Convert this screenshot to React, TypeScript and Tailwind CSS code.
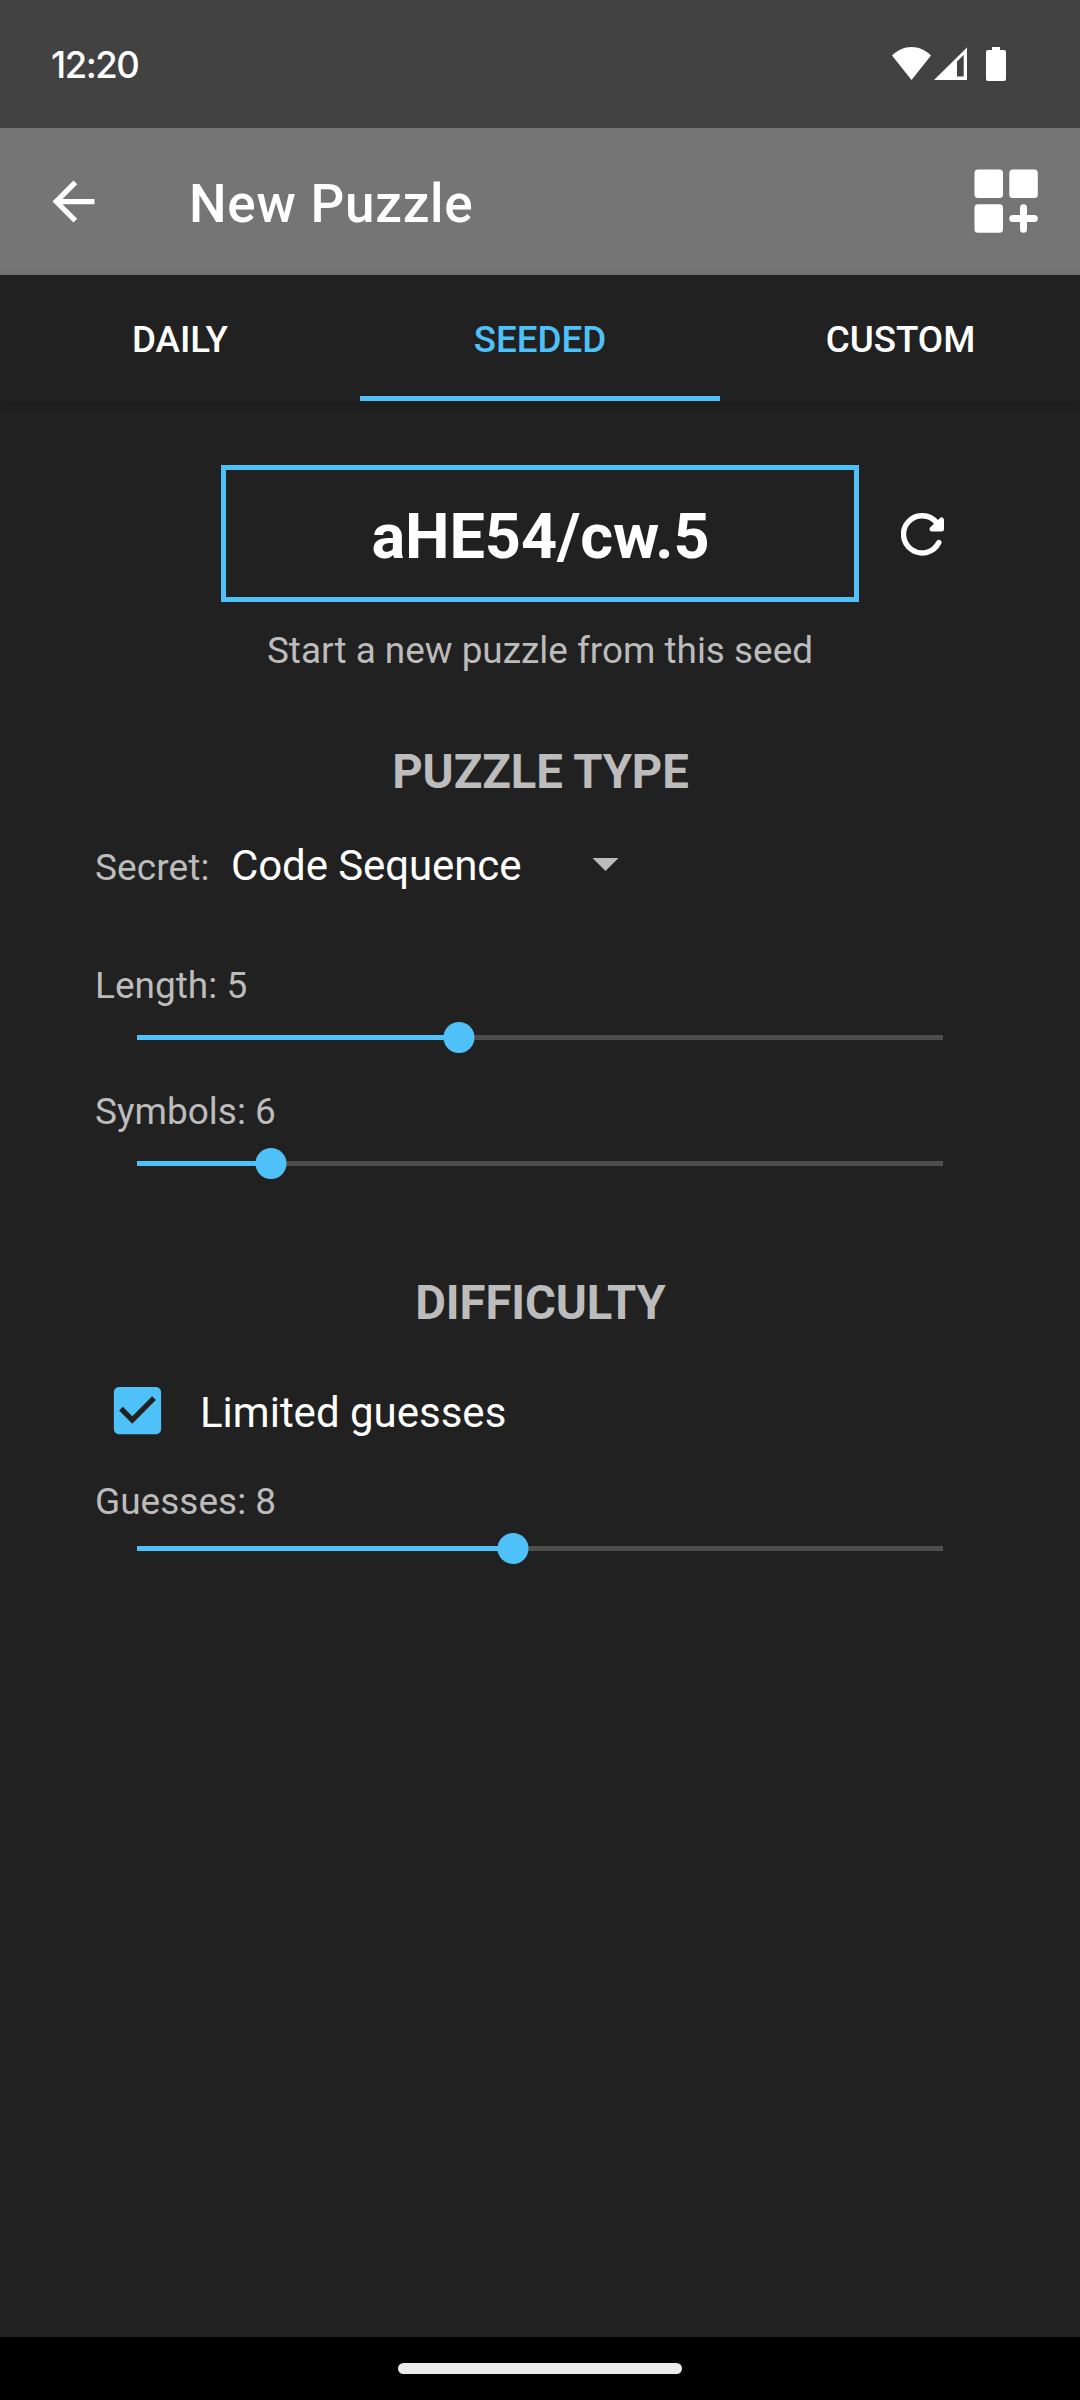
type SliderProps = { label: string; percent: number; labelClass: string; trackClass: string };

function LabeledSlider({ label, percent, labelClass, trackClass }: SliderProps) {
  return (
    <>
      <div className={`h-11 pl-[95px] text-[37px] leading-[44px] text-[#bcbcbc] ${labelClass}`}>{label}</div>
      <div className={`relative ml-[137px] flex h-[31px] w-[806px] items-center ${trackClass}`}>
        <div className="h-[5px] w-full bg-[#4d4d4d]">
          <div className="h-full bg-[#4fc1f9]" style={{ width: `${percent}%` }} />
        </div>
        <div
          className="absolute top-0 size-[31px] -translate-x-1/2 rounded-full bg-[#4fc1f9]"
          style={{ left: `${percent}%` }}
        />
      </div>
    </>
  );
}

function StatusBar() {
  return (
    <header className="flex h-32 items-start justify-between bg-[#424242] pl-[51px] pr-[74px]">
      <span className="mt-[43px] h-11 font-['Inter'] text-[36.5px] font-medium leading-[44px] tracking-[-1.5px]">12:20</span>
      <div className="mt-[47px] flex">
        <svg width="39" height="34" viewBox="0 0 39 34" fill="#fff">
          <path d="M0 8.6C5.5 3 12 0 19.500 0S33.500 3 39 8.600L19.500 33Z" />
        </svg>
        <svg className="ml-[3px]" width="33" height="34" viewBox="0 0 33 34" fill="#fff">
          <path fillRule="evenodd" d="M33 .5V33H0ZM23 14.500V29.500H29.700V8Z" />
        </svg>
        <svg className="ml-[19px]" width="20" height="34" viewBox="0 0 20 34" fill="#fff">
          <path d="M6 0H14V3H18Q20 3 20 5V32Q20 34 18 34H2Q0 34 0 32V5Q0 3 2 3H6Z" />
        </svg>
      </div>
    </header>
  );
}

export default function App() {
  return (
    <div className="flex h-[2400px] w-[1080px] flex-col overflow-hidden bg-[#212121] font-['Roboto',sans-serif] text-white">
      <StatusBar />
      <div className="flex h-[147px] items-center bg-[#757575] pl-[42px] pr-[42px]">
        <svg width="63" height="63" viewBox="0 0 24 24" fill="#fff">
          <path d="M20 11H7.830l5.590-5.590L12 4l-8 8 8 8 1.410-1.410L7.830 13H20v-2z" />
        </svg>
        <h1 className="ml-[84px] mt-1 flex-1 text-[53px] font-medium leading-[64px] tracking-[0.75px]">New Puzzle</h1>
        <svg className="-mt-0.5" width="64" height="64" viewBox="0 0 64 64" fill="#fff">
          <rect x="0.500" y="0.500" width="28.500" height="28.500" rx="3.500" />
          <rect x="35.300" y="0.500" width="28.500" height="28.500" rx="3.500" />
          <rect x="0.500" y="35.200" width="28.500" height="28.500" rx="3.500" />
          <path d="M49.500 38.700V60.300M38.800 49.500H60.300" stroke="#fff" strokeWidth="7" strokeLinecap="round" />
        </svg>
      </div>
      <nav className="grid h-[126px] grid-cols-3 text-center text-[36.75px] font-medium leading-[130px] shadow-[0_4px_10px_rgba(0,0,0,0.2)]">
        <div>DAILY</div>
        <div className="h-[126px] border-b-[5px] border-[#4fc1f9] text-[#4fc1f9]">SEEDED</div>
        <div className="pl-px">CUSTOM</div>
      </nav>

      <main className="flex-1">
        <div className="mt-16 flex items-center pl-[221px]">
          <div className="h-[137px] w-[638px] border-[5px] border-[#4fc1f9] pl-px text-center text-[63px] font-bold leading-[133px] tracking-[-0.1px]">
            aHE54/cw.5
          </div>
          <svg className="ml-[42px] mt-0.5" width="43" height="43" viewBox="0 0 43 43" fill="none" stroke="#fff" strokeLinecap="round" strokeLinejoin="round">
            <path d="M37.800 29.500A18.600 18.600 0 1 1 35.500 9.500" strokeWidth="5.400" />
            <path d="M40.500 7V16H31Z" fill="#fff" strokeWidth="5" />
          </svg>
        </div>
        <p className="mt-[27px] h-11 text-center text-[36.9px] leading-[44px] text-[#bcbcbc]">Start a new puzzle from this seed</p>

        <h2 className="mt-[71px] h-14 pl-px text-center text-[47.25px] font-bold leading-[56px] tracking-[-0.1px] text-[#bcbcbc]">PUZZLE TYPE</h2>
        <div className="mt-[41px] flex h-[50px] items-baseline pl-[95px] leading-[50px]">
          <span className="w-[136px] text-[37px] tracking-[0.1px] text-[#bcbcbc]">Secret:</span>
          <span className="w-[361px] text-[42px] tracking-[-0.1px]">Code Sequence</span>
          <svg className="mt-[17px] self-start" width="27" height="13" viewBox="0 0 27 13" fill="#bcbcbc">
            <path d="M0.500 0H26.500L13.500 13Z" />
          </svg>
        </div>
        <LabeledSlider label="Length: 5" percent={40} labelClass="mt-[73px]" trackClass="mt-[14px]" />
        <LabeledSlider label="Symbols: 6" percent={16.667} labelClass="mt-[37px]" trackClass="mt-[14px]" />

        <h2 className="mt-24 h-14 pl-px text-center text-[47.25px] font-bold leading-[56px] tracking-[-0.1px] text-[#bcbcbc]">DIFFICULTY</h2>
        <div className="mt-12 flex h-[63px] items-center pl-[105.500px]">
          <svg width="63" height="63" viewBox="0 0 24 24" fill="#4fc1f9">
            <path d="M19 3H5c-1.110 0-2 .9-2 2v14c0 1.100.89 2 2 2h14c1.110 0 2-.9 2-2V5c0-1.100-.89-2-2-2zm-9 14l-5-5 1.410-1.410L10 14.170l7.590-7.590L19 8l-9 9z" />
          </svg>
          <span className="ml-[31.500px] mt-1 text-[42px] leading-[50px]">Limited guesses</span>
        </div>
        <LabeledSlider label="Guesses: 8" percent={46.667} labelClass="mt-[38px]" trackClass="mt-[9px]" />
      </main>

      <footer className="flex h-[63px] justify-center bg-black pt-[26px]">
        <div className="h-[11px] w-[284px] rounded-full bg-[#ebebeb]" />
      </footer>
    </div>
  );
}
